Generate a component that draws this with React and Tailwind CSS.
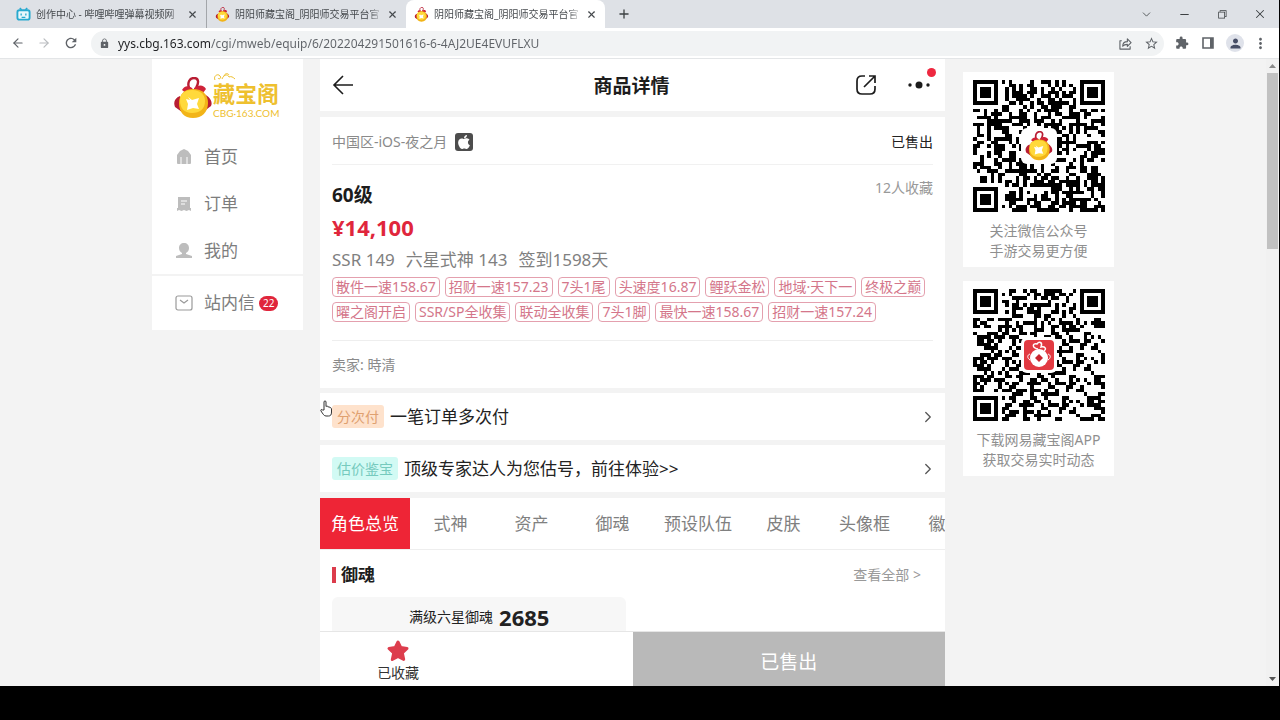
import { ArrowLeft, ArrowRight, ChevronDown, ChevronRight, Minus, Plus, X } from "lucide-react";
import { FaApple } from "react-icons/fa";
import { MdExtension, MdLock, MdMoreVert, MdPerson, MdRefresh, MdStarBorder } from "react-icons/md";
import { VscChromeRestore } from "react-icons/vsc";

const browserTabs = [
  { title: "创作中心 - 哔哩哔哩弹幕视频网", icon: "bili" },
  { title: "阴阳师藏宝阁_阴阳师交易平台官", icon: "bag" },
  { title: "阴阳师藏宝阁_阴阳师交易平台官", icon: "bag", active: true },
];

const tags = [
  "散件一速158.67",
  "招财一速157.23",
  "7头1尾",
  "头速度16.87",
  "鲤跃金松",
  "地域·天下一",
  "终极之巅",
  "曜之阁开启",
  "SSR/SP全收集",
  "联动全收集",
  "7头1脚",
  "最快一速158.67",
  "招财一速157.24",
];

const sections = ["角色总览", "式神", "资产", "御魂", "预设队伍", "皮肤", "头像框", "徽章"];

function LuckyBag({ className }) {
  return (
    <svg viewBox="0 0 38 42" className={className} aria-hidden="true">
      <path d="M15 11C13 5 16 1 20 1c5 0 5 5 2 10" fill="none" stroke="#b81d33" strokeWidth="2.4" />
      <path d="M18 11C14 8 10 9 8 13l4 3 8-2zM20 11c5-4 10-3 12 1l-3 4-9-2z" fill="#cf2338" />
      <path d="M6 19C1 21-1 25 1 30l7 5zM30 17c6 3 9 8 7 12l-8 6z" fill="#b81d33" />
      <path d="M19 12c10 0 15 6 15 14 0 9-6 15-15 15S5 35 5 26c0-8 5-14 14-14z" fill="#f2b418" />
      <path d="M18 13c9 0 13 5 13 11 0 8-5 12-13 12S6 31 6 24c0-7 4-11 12-11z" fill="#ffd93b" />
      <path d="M14 20l4 3 7-2-2 6 2 5-6-1-6 2 1-6-2-5 4 1z" fill="#fff" />
    </svg>
  );
}

function BiliIcon() {
  return (
    <svg viewBox="0 0 16 16" className="size-[15px] shrink-0" aria-hidden="true">
      <path d="M4 1l2 2M12 1l-2 2" stroke="#27a9cf" strokeWidth="1.6" />
      <rect x="1.5" y="3.5" width="13" height="10" rx="2" fill="#e8f7fb" stroke="#27a9cf" strokeWidth="2" />
      <path d="M5.5 7v2M10.5 7v2M6 11h4" stroke="#27a9cf" strokeWidth="1.4" />
    </svg>
  );
}

// 二维码，37x37 个模块，中间留空放图标
const QR_SIZE = 37;

function buildQrPath(seed) {
  let s = seed;
  let d = "";
  const inFinder = (x, y) =>
    (x < 8 && y < 8) || (x > QR_SIZE - 9 && y < 8) || (x < 8 && y > QR_SIZE - 9);
  for (let y = 0; y < QR_SIZE; y++) {
    for (let x = 0; x < QR_SIZE; x++) {
      s = (s * 1103515245 + 12345) % 2147483648;
      const center = x > 13 && x < 23 && y > 13 && y < 23;
      if (inFinder(x, y) || center) continue;
      if (s / 2147483648 < 0.52) d += `M${x} ${y}h1v1h-1z`;
    }
  }
  return d;
}

function QrCode({ seed, label, children }) {
  return (
    <div className="relative grid place-items-center">
      <svg viewBox="0 0 37 37" className="w-[132px]" shapeRendering="crispEdges" role="img" aria-label={label}>
        <path d={buildQrPath(seed)} />
        {[[0, 0], [30, 0], [0, 30]].map(([x, y]) => (
          <g key={`${x}-${y}`}>
            <rect x={x} y={y} width="7" height="7" />
            <rect x={x + 1} y={y + 1} width="5" height="5" fill="#fff" />
            <rect x={x + 2} y={y + 2} width="3" height="3" />
          </g>
        ))}
      </svg>
      <div className="absolute grid size-9 place-items-center rounded-md bg-white">{children}</div>
    </div>
  );
}

function BrowserChrome() {
  return (
    <header className="shrink-0">
      <div className="flex h-7 bg-[#dee1e6] pl-2">
        {browserTabs.map((tab, i) => (
          <div
            key={i}
            className={`flex h-7 w-[199px] items-center gap-1 px-2 text-[#45494d] ${
              tab.active ? "rounded-t-lg bg-white" : ""
            } ${i === 0 ? "border-r border-[#a3a6aa]" : ""}`}
          >
            {tab.icon === "bili" ? <BiliIcon /> : <LuckyBag className="size-[15px] shrink-0" />}
            <span className="flex-1 pl-px text-[10px] whitespace-nowrap mask-r-from-90%">{tab.title}</span>
            <button aria-label="关闭标签页">
              <X size={11} strokeWidth={2.5} />
            </button>
          </div>
        ))}
        <button aria-label="新标签页" className="ml-3 text-[#3c4043]">
          <Plus size={14} strokeWidth={2.25} />
        </button>
        <div className="ml-auto flex items-center text-[#3c4043]">
          <button aria-label="搜索标签页" className="grid w-[38px] place-items-center"><ChevronDown size={13} strokeWidth={1.5} /></button>
          <button aria-label="最小化" className="grid w-[38px] place-items-center"><Minus size={13} strokeWidth={2} /></button>
          <button aria-label="还原" className="grid w-[38px] place-items-center"><VscChromeRestore size={12} /></button>
          <button aria-label="关闭" className="grid w-[38px] place-items-center"><X size={14} strokeWidth={1.75} /></button>
        </div>
      </div>

      <div className="flex h-[31px] items-center border-b border-[#e3e5e7] bg-white pr-[10px] pl-[11px] text-[#5f6368]">
        <button aria-label="后退"><ArrowLeft size={14} /></button>
        <button aria-label="前进" className="ml-3 text-[#b9bcbf]"><ArrowRight size={14} /></button>
        <button aria-label="刷新" className="ml-3"><MdRefresh size={16} /></button>
        <div className="ml-3 flex h-[25px] flex-1 items-center rounded-full bg-[#f1f3f4] pr-[5px] pl-2">
          <MdLock size={11} className="shrink-0" />
          <input
            aria-label="地址栏"
            className="ml-2 min-w-0 flex-1 bg-[linear-gradient(90deg,#202124_93px,#5f6368_93px)] bg-clip-text pt-px text-[12px] text-transparent outline-none"
            defaultValue="yys.cbg.163.com/cgi/mweb/equip/6/202204291501616-6-4AJ2UE4EVUFLXU"
          />
          <button aria-label="分享">
            <svg viewBox="0 0 14 14" className="size-[13px]" fill="none" stroke="currentColor" strokeWidth="1.2">
              <path d="M3 4H1v9h11v-3M4 10c0-4 2-5 5-5V2l4 4-4 4V8C7 8 5.500 8 4 10z" strokeLinejoin="round" />
            </svg>
          </button>
          <button aria-label="收藏此标签页" className="ml-3"><MdStarBorder size={15} /></button>
        </div>
        <button aria-label="扩展程序" className="ml-[11px]"><MdExtension size={14} /></button>
        <button aria-label="侧边栏" className="ml-3">
          <svg viewBox="0 0 14 14" className="size-[14px]">
            <path d="M2 2h10v10H2z" fill="none" stroke="currentColor" strokeWidth="1.6" />
            <path d="M9 2h3v10H9z" fill="currentColor" />
          </svg>
        </button>
        <button aria-label="用户" className="ml-[11px] grid size-[18px] place-items-center rounded-full bg-[#dfe2ea] text-[#464d66]">
          <MdPerson size={15} />
        </button>
        <button aria-label="更多" className="ml-2"><MdMoreVert size={17} /></button>
      </div>
    </header>
  );
}

function HomeIcon() {
  return (
    <svg viewBox="0 0 16 16" className="size-4" fill="#bdbdbd" aria-hidden="true">
      <path d="M8 0l4 2 3 4v8a1 1 0 01-1 1h-2.500V8h-1v7h-5V8h-1v7H2a1 1 0 01-1-1V6l3-4z" />
    </svg>
  );
}

function OrderIcon() {
  return (
    <svg viewBox="0 0 16 16" className="size-4" fill="#bdbdbd" aria-hidden="true">
      <path d="M2 1h12v11h1v3l-2-1-2.500 1L8 14l-2.500 1L3 14l-2 1v-3h1z" />
      <path d="M5 5h6M5 8h4" stroke="#fff" strokeWidth="1" />
    </svg>
  );
}

function UserIcon() {
  return (
    <svg viewBox="0 0 16 16" className="size-4" fill="#bdbdbd" aria-hidden="true">
      <path d="M8 0c3 0 5 2 5 5 0 2-1 4-3 5v1l6 2v2H0v-2l6-2v-1C4 9 3 7 3 5c0-3 2-5 5-5z" />
    </svg>
  );
}

function MailIcon() {
  return (
    <svg viewBox="0 0 18 16" className="h-4 w-[18px]" fill="none" stroke="#9a9a9a" strokeWidth="1.2" aria-hidden="true">
      <rect x="1" y="1" width="16" height="14" rx="2" />
      <path d="M5 5l4 3 4-3" />
    </svg>
  );
}

function Sidebar() {
  const items = [
    { label: "首页", Icon: HomeIcon },
    { label: "订单", Icon: OrderIcon },
    { label: "我的", Icon: UserIcon },
  ];
  return (
    <nav className="w-[151px] shrink-0 self-start bg-white text-[17px] text-[#7d7d7d]">
      <a href="#home" className="flex h-[74px] items-center gap-px pt-1 pl-[22px]">
        <LuckyBag className="h-[42px] w-[38px]" />
        <span className="flex flex-col text-[#eec02f]">
          <span className="relative font-['Noto_Sans_CJK_SC',sans-serif] text-[22px] leading-[30px] font-bold">
            藏宝阁
            <svg viewBox="0 0 24 8" className="absolute -top-1 left-0 h-2 w-6" fill="none" stroke="#eec02f" aria-hidden="true">
              <path d="M2 7c-2-4 3-7 5-4 2 2-1 4-2 2M9 6c2-5 6-5 7-2 2-1 4 0 6 2M11 3c1-3 4-3 5-1" />
            </svg>
          </span>
          <span className="font-[Lato] text-[10px] leading-3">CBG·163.COM</span>
        </span>
      </a>
      {items.map(({ label, Icon }) => (
        <a key={label} href="#nav" className="flex h-[47px] items-center gap-3 pl-6">
          <Icon />
          {label}
        </a>
      ))}
      <a href="#message" className="flex h-[56px] items-center border-t-2 border-[#f3f3f3] pl-[23px]">
        <MailIcon />
        <span className="ml-[11px]">站内信</span>
        <span className="ml-1 rounded-full bg-[#e0263c] px-1 text-[10px] leading-[15px] text-white">22</span>
      </a>
    </nav>
  );
}

function TitleBar() {
  return (
    <div className="grid h-[52px] shrink-0 grid-cols-[1fr_auto_1fr] items-center bg-white pr-[14px] pl-3 text-[#1c1c1c]">
      <button aria-label="返回" className="justify-self-start">
        <svg viewBox="0 0 22 22" className="size-[22px]" fill="none" stroke="currentColor" strokeWidth="1.6">
          <path d="M11 2L2 11l9 9M2 11h19" />
        </svg>
      </button>
      <h1 className="pt-[2px] text-[19px] font-bold">商品详情</h1>
      <div className="flex items-center justify-self-end">
        <button aria-label="分享">
          <svg viewBox="0 0 22 22" className="size-[22px]" fill="none" stroke="currentColor" strokeWidth="1.7">
            <path d="M10 2H7C4 2 2 4 2 7v8c0 3 2 5 5 5h8c3 0 5-2 5-5v-3M9 13L20 2M14 2h6v7" />
          </svg>
        </button>
        <button aria-label="更多" className="relative ml-[30px]">
          <svg viewBox="0 0 24 8" className="h-2 w-6" fill="currentColor">
            <circle cx="3" cy="4" r="1.700" />
            <circle cx="12" cy="4" r="3.500" />
            <circle cx="21" cy="4" r="1.700" />
          </svg>
          <span className="absolute -top-[13px] -right-[5px] size-[9px] rounded-full bg-[#ee2840]" />
        </button>
      </div>
    </div>
  );
}

function ProductCard() {
  return (
    <section className="mt-[6px] bg-white px-3">
      <div className="flex h-12 items-center border-b border-[#f1f1f1] pt-[2px] text-sm text-[#8a8a8a]">
        中国区-iOS-夜之月
        <span className="ml-2 grid size-[18px] place-items-center rounded-[3px] bg-[#4d4d4d] text-white">
          <FaApple size={16} />
        </span>
        <span className="ml-auto text-[#222]">已售出</span>
      </div>
      <div className="flex justify-between pt-3">
        <h2 className="pt-1 text-[19px] leading-[28px] font-bold text-[#1c1c1c]">60级</h2>
        <span className="text-sm leading-[22px] text-[#999]">12人收藏</span>
      </div>
      <p className="text-[22px] leading-[36px] font-bold text-[#e0263c]">¥14,100</p>
      <p className="flex gap-[11px] text-[17px] leading-[30px] text-[#808080]">
        <span>SSR 149</span>
        <span>六星式神 143</span>
        <span>签到1598天</span>
      </p>
      <ul className="mt-[2px] flex flex-wrap gap-x-[5px] gap-y-[5px] text-sm leading-[18px] text-[#d4768a]">
        {tags.map((tag) => (
          <li key={tag} className="rounded-[4px] border border-[#e4a0ae] px-[3px]">
            {tag}
          </li>
        ))}
      </ul>
      <div className="mt-[18px] flex h-12 items-center border-t border-[#eee] text-sm text-[#8a8a8a]">卖家: 時清</div>
    </section>
  );
}

function PromoRow({ badge, badgeClass, text }) {
  return (
    <a href="#promo" className="mt-[5px] flex h-[47px] items-center bg-white px-3 text-[17px] text-[#222]">
      <span className={`rounded-[3px] px-[5px] text-sm leading-[23px] ${badgeClass}`}>{badge}</span>
      <span className="ml-[6px]">{text}</span>
      <ChevronRight size={18} strokeWidth={1.75} className="-mr-1 ml-auto text-[#555]" />
    </a>
  );
}

function ProductPage() {
  return (
    <main className="relative flex max-w-[625px] min-w-0 flex-1 flex-col">
      <TitleBar />
      <div className="min-h-0 flex-1 overflow-hidden">
        <ProductCard />
        <PromoRow badge="分次付" badgeClass="bg-[#fee2cc] text-[#dfa070]" text="一笔订单多次付" />
        <PromoRow badge="估价鉴宝" badgeClass="bg-[#d2faf4] text-[#76cabe]" text="顶级专家达人为您估号，前往体验>>" />

        <div className="mt-[6px] flex overflow-hidden border-b border-[#eee] bg-white text-[17px] whitespace-nowrap text-[#808080]">
          {sections.map((name, i) => (
            <button
              key={name}
              className={`h-[51px] min-w-[81px] shrink-0 px-[11px] ${i === 0 ? "bg-[#ee2536] text-white" : ""}`}
            >
              {name}
            </button>
          ))}
        </div>

        <section className="bg-white px-3">
          <div className="flex h-[47px] items-center pt-[2px] pr-3">
            <span className="mr-[5px] h-4 w-1 bg-[#dc3c4c]" />
            <h2 className="text-[17px] font-bold text-[#1c1c1c]">御魂</h2>
            <a href="#all" className="ml-auto text-sm text-[#999]">查看全部 &gt;</a>
          </div>
          <div className="flex h-24 w-[49%] items-start justify-center gap-[6px] rounded-md bg-[#f7f7f7] pt-[3px] text-[#222]">
            <span className="text-sm leading-[34px]">满级六星御魂</span>
            <strong className="text-[22px] leading-[34px]">2685</strong>
          </div>
        </section>
      </div>

      <footer className="grid h-[55px] shrink-0 grid-cols-2 border-t border-[#e6e6e6] bg-white">
        <div className="flex">
          <button className="flex w-1/2 flex-col items-center justify-center text-sm leading-5 text-[#333]">
            <svg viewBox="0 0 24 24" className="mt-1 size-6" fill="#dd3d4d" stroke="#dd3d4d" strokeWidth="3" strokeLinejoin="round" aria-hidden="true">
              <path d="M12 3l2.700 5.500 6.300 1-4.700 4.400 1.400 6.500L12 17.500l-5.700 3 1.400-6.500L3 9.500l6.300-1z" />
            </svg>
            已收藏
          </button>
        </div>
        <button disabled className="bg-[#b9b9b9] pt-[6px] text-[19px] text-white">已售出</button>
      </footer>

      {/* 鼠标指针 */}
      <svg viewBox="0 0 12 17" className="absolute top-[341px] left-0 h-[17px] w-3" fill="#fff" stroke="#333" strokeWidth="1" aria-hidden="true">
        <path d="M4 10V2c0-1.500 2-1.500 2 0v4.500c1-.7 2-.4 2 .6 1-.6 1.900-.2 1.900.7.800-.3 1.600 0 1.600 1V12c0 3-1 4-3 4H6c-2 0-3-2-5-5-.8-1.500.8-2 1.600-1z" />
      </svg>
    </main>
  );
}

function QrPanel() {
  return (
    <aside className="mt-[13px] flex w-[151px] shrink-0 flex-col gap-[14px] text-center text-sm leading-5 text-[#8f8f8f]">
      <figure className="bg-white px-2 pt-2 pb-[6px]">
        <QrCode seed={20220429} label="微信公众号二维码">
          <LuckyBag className="size-[30px]" />
        </QrCode>
        <figcaption className="mt-[9px]">
          关注微信公众号
          <br />
          手游交易更方便
        </figcaption>
      </figure>
      <figure className="bg-white px-2 pt-2 pb-[6px]">
        <QrCode seed={1501616} label="藏宝阁APP二维码">
          <svg viewBox="0 0 30 30" className="size-[30px]" aria-hidden="true">
            <rect width="30" height="30" rx="4" fill="#e23a42" />
            <path d="M14 9C8 8 8 3 13 4c2-3 6-2 4 3 4-1 6 2 3 4" fill="none" stroke="#fff" strokeWidth="1.5" />
            <path d="M6 14c-3 1-3 4 0 6M24 14c3 1 3 4 0 6" fill="none" stroke="#fff" />
            <circle cx="15" cy="18" r="9" fill="#fff" />
            <path d="M15 14l4 4-4 4-4-4z" fill="#c9252e" />
          </svg>
        </QrCode>
        <figcaption className="mt-[9px] whitespace-nowrap">
          下载网易藏宝阁APP
          <br />
          获取交易实时动态
        </figcaption>
      </figure>
    </aside>
  );
}

function Scrollbar() {
  return (
    <div className="flex w-[13px] shrink-0 flex-col items-center bg-[#f1f1f1]" aria-hidden="true">
      <svg viewBox="0 0 7 4" className="my-[5px] h-1 w-[7px]" fill="#8a8a8a"><path d="M0 4l3.500-4L7 4z" /></svg>
      <div className="h-[28%] w-[11px] bg-[#c1c1c1]" />
      <svg viewBox="0 0 7 4" className="mt-auto mb-[5px] h-1 w-[7px]" fill="#555"><path d="M0 0l3.500 4L7 0z" /></svg>
    </div>
  );
}

export default function App() {
  return (
    <div className="flex h-screen flex-col bg-black pr-px pb-[34px] font-['Noto_Sans','Noto_Sans_CJK_SC',sans-serif]">
      <BrowserChrome />
      <div className="flex min-h-0 flex-1 bg-[#f3f3f3]">
        <div className="flex min-w-0 flex-1 justify-center overflow-hidden">
          <Sidebar />
          <div className="w-[17px] shrink-0" />
          <ProductPage />
          <div className="w-[18px] shrink-0" />
          <QrPanel />
        </div>
        <Scrollbar />
      </div>
    </div>
  );
}
